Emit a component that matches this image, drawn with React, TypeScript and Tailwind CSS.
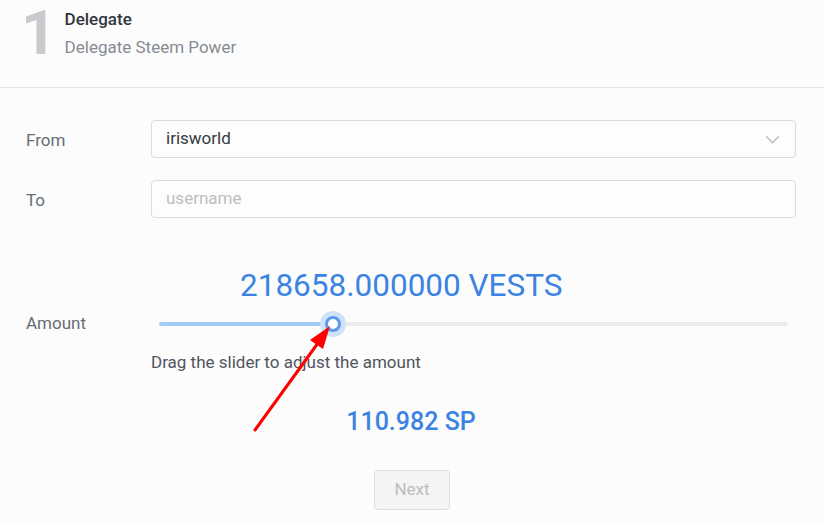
import React from 'react';

const ChevronDown: React.FC<{ className?: string }> = ({ className }) => (
  <svg className={className} viewBox="0 0 16 10" fill="none" stroke="currentColor" strokeWidth="1.2" aria-hidden="true">
    <path d="M1 1.5 8 8.5 15 1.5" />
  </svg>
);

const App: React.FC = () => {
  return (
    <div className="relative w-[824px] h-[523px] overflow-hidden bg-[#fcfcfc] font-['Roboto',sans-serif]">
      <header className="h-[88px] border-b border-[#e4e4e4] flex items-start pl-[21px] pt-[2px]">
        <span className="-mt-[5px] text-[62px] leading-[72px] font-bold text-[#c8cacd]">1</span>
        <div className="pt-[5px] ml-[8px]">
          <h1 className="text-[17px] leading-[24px] font-medium text-[#323740]">Delegate</h1>
          <p className="mt-[4px] text-[17px] leading-[24px] text-[#868b93]">Delegate Steem Power</p>
        </div>
      </header>

      <div className="pt-[32px] pl-[26px] pr-[28px]">
        <div className="flex items-center h-[38px]">
          <label className="w-[125px] pt-[3px] text-[17px] text-[#666c73]">From</label>
          <div className="flex-1 h-[38px] border border-[#dcdcdc] rounded-[4px] bg-[#fdfdfd] flex items-center justify-between pl-[14px] pr-[15px]">
            <span className="text-[17px] text-[#353a40]">irisworld</span>
            <ChevronDown className="w-[15px] h-[9px] text-[#a9abae]" />
          </div>
        </div>
        <div className="flex items-center h-[38px] mt-[22px]">
          <label className="w-[125px] pt-[3px] text-[17px] text-[#666c73]">To</label>
          <div className="flex-1 h-[38px] border border-[#dcdcdc] rounded-[4px] bg-[#fdfdfd] flex items-center pl-[14px]">
            <span className="text-[17px] text-[#bcbfc2]">username</span>
          </div>
        </div>

        <div className="mt-[48px] pl-[214px] text-[31.5px] leading-[40px] text-[#3b83e3]">218658.000000 VESTS</div>

        <div className="flex items-center h-[30px] mt-[3px]">
          <label className="w-[125px] text-[17px] text-[#666c73]">Amount</label>
          <div className="flex-1 px-[8px]">
            <div className="relative h-[4px] rounded-full bg-[#ebebeb]">
              <div className="absolute left-0 top-0 h-[4px] w-[174px] rounded-full bg-[#a3cdf7]" />
              <div className="absolute left-[161px] top-[-11px] w-[26px] h-[26px] rounded-full bg-[#cfe2fa] flex items-center justify-center">
                <div className="w-[16px] h-[16px] rounded-full bg-white border-[3px] border-[#5c9bec]" />
              </div>
            </div>
          </div>
        </div>

        <p className="mt-[11px] ml-[125px] text-[17px] leading-[24px] text-[#50555c]">Drag the slider to adjust the amount</p>

        <div className="mt-[33px] text-center pr-[2px] text-[25px] leading-[30px] font-medium text-[#3b83e3] -ml-[26px] -mr-[28px]">110.982 SP</div>

        <div className="mt-[33px] flex justify-center -ml-[26px] -mr-[28px]">
          <button className="w-[76px] h-[40px] rounded-[4px] border border-[#dedede] bg-[#f4f4f4] text-[17px] text-[#bdbdbd]">Next</button>
        </div>
      </div>

      <svg className="absolute left-0 top-0 pointer-events-none" width="824" height="523" aria-hidden="true">
        <line x1="255" y1="430" x2="318" y2="343" stroke="#ff0000" strokeWidth="3" strokeLinecap="round" />
        <polygon points="330,326 310,340 323,349" fill="#ff0000" />
      </svg>
    </div>
  );
};

export default App;
